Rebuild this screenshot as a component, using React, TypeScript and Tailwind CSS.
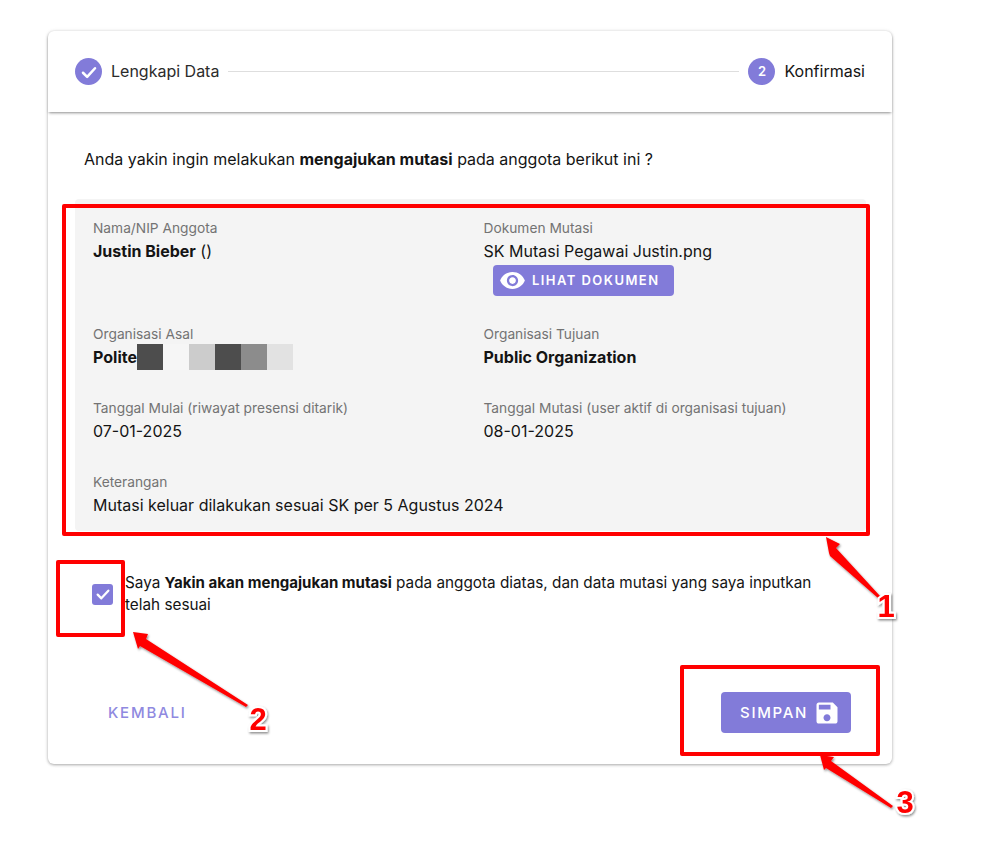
function Field({ label, children, className = "" }: { label: string; children: React.ReactNode; className?: string }) {
  return (
    <div className={className}>
      <div className="text-[13.75px] leading-[21px] text-[#737373]">{label}</div>
      <div className="text-[16px] leading-[24px] text-[#141414]">{children}</div>
    </div>
  );
}

function Arrow({ d }: { d: string }) {
  return <path d={d} fill="#ff0000" filter="url(#as)" />;
}

function Num({ x, y, t }: { x: number; y: number; t: string }) {
  return (
    <text
      x={x}
      y={y}
      textAnchor="middle"
      fontFamily="Liberation Sans, sans-serif"
      fontWeight="700"
      fontSize="31"
      fill="#ff0000"
      stroke="#ffffff"
      strokeWidth="4"
      paintOrder="stroke"
      filter="url(#as)"
    >
      {t}
    </text>
  );
}

export default function App() {
  return (
    <div className="relative w-[985px] h-[841px] bg-white overflow-hidden font-['Inter',sans-serif] text-[#141414]">
      <div className="pl-[48px] pt-[31px]">
        <div className="w-[844px] h-[733px] bg-white rounded-[6px] shadow-[0_1px_3px_rgba(0,0,0,0.3),0_0_4px_rgba(0,0,0,0.08)] flex flex-col">
          {/* Stepper */}
          <div className="h-[81px] shrink-0 rounded-t-[6px] px-[27px] flex items-center shadow-[0_2px_3px_-1px_rgba(0,0,0,0.45)]">
            <div className="w-[27px] h-[27px] rounded-full bg-[#827bd9] flex items-center justify-center">
              <svg width="18" height="18" viewBox="0 0 24 24" fill="none" stroke="#fff" strokeWidth="3.4" strokeLinecap="round" strokeLinejoin="round">
                <path d="M4 13l5.5 5.5L20 7" />
              </svg>
            </div>
            <span className="ml-[9px] text-[16px] leading-[20px] text-[#2b2b2b] -mt-[2px]">Lengkapi Data</span>
            <div className="flex-1 h-px bg-[#dedede] mx-[9px]" />
            <div className="w-[27px] h-[27px] rounded-full bg-[#827bd9] flex items-center justify-center text-white text-[13px] font-semibold">2</div>
            <span className="ml-[9px] text-[16px] leading-[20px] text-[#141414] -mt-[2px]">Konfirmasi</span>
          </div>

          {/* Body */}
          <div className="flex-1 pl-[27px] pr-[26px] flex flex-col">
            <p className="mt-[36px] ml-[9px] text-[16px] leading-[22px]">
              Anda yakin ingin melakukan <b className="font-bold">mengajukan mutasi</b> pada anggota berikut ini ?
            </p>

            <div className="mt-[29px] h-[332px] bg-[#f4f4f4] rounded-[4px] pl-[18px] pt-[19px] grid grid-cols-[390.5px_1fr] content-start">
              <Field label="Nama/NIP Anggota" className="h-[106px]">
                <b className="font-bold">Justin Bieber</b> ()
              </Field>
              <div className="h-[106px]">
                <div className="text-[13.75px] leading-[21px] text-[#737373]">Dokumen Mutasi</div>
                <div className="text-[16px] leading-[24px]">SK Mutasi Pegawai Justin.png</div>
                <div className="mt-[2px] ml-[9px] w-[181px] h-[31px] rounded-[4px] bg-[#827bd9] flex items-center pl-[6px] text-white">
                  <svg width="27" height="27" viewBox="0 0 24 24" fill="#fff">
                    <path d="M12 4.5C7 4.5 2.73 7.61 1 12c1.73 4.39 6 7.5 11 7.5s9.27-3.11 11-7.5c-1.73-4.39-6-7.5-11-7.5M12 17c-2.76 0-5-2.24-5-5s2.24-5 5-5 5 2.24 5 5-2.24 5-5 5m0-8c-1.66 0-3 1.34-3 3s1.34 3 3 3 3-1.34 3-3-1.34-3-3-3" />
                  </svg>
                  <span className="ml-[6.5px] text-[13px] font-semibold tracking-[1.45px] whitespace-nowrap">LIHAT DOKUMEN</span>
                </div>
              </div>

              <Field label="Organisasi Asal" className="h-[74px]">
                <div className="flex items-center h-[24px]">
                  <b className="font-bold">Polite</b>
                  <span className="flex h-[26px]">
                    <span className="w-[26px] bg-[#4d4d4d]" />
                    <span className="w-[26px] bg-[#f6f6f6]" />
                    <span className="w-[26px] bg-[#cccccc]" />
                    <span className="w-[26px] bg-[#4d4d4d]" />
                    <span className="w-[26px] bg-[#8c8c8c]" />
                    <span className="w-[26px] bg-[#e2e2e2]" />
                  </span>
                </div>
              </Field>
              <Field label="Organisasi Tujuan" className="h-[74px]">
                <b className="font-bold">Public Organization</b>
              </Field>

              <Field label="Tanggal Mulai (riwayat presensi ditarik)" className="h-[74px]">
                07-01-2025
              </Field>
              <Field label="Tanggal Mutasi (user aktif di organisasi tujuan)" className="h-[74px]">
                08-01-2025
              </Field>

              <Field label="Keterangan" className="col-span-2">
                Mutasi keluar dilakukan sesuai SK per 5 Agustus 2024
              </Field>
            </div>

            <div className="mt-[41px] flex items-center">
              <div className="ml-[17px] w-[21px] h-[21px] rounded-[3px] bg-[#827bd9] flex items-center justify-center shrink-0">
                <svg width="16" height="16" viewBox="0 0 24 24" fill="none" stroke="#fff" strokeWidth="3.4" strokeLinecap="round" strokeLinejoin="round">
                  <path d="M4 13l5.5 5.5L20 7" />
                </svg>
              </div>
              <p className="ml-[12px] w-[700px] text-[15.3px] leading-[22px]">
                Saya <b className="font-bold text-[15.05px]">Yakin akan mengajukan mutasi</b> pada anggota diatas, dan data mutasi yang saya inputkan telah sesuai
              </p>
            </div>

            <div className="mt-[76px] flex items-center justify-between pl-[33px] pr-[15px]">
              <span className="pt-[1px] text-[15px] font-medium tracking-[1.8px] text-[#8f89e0]">KEMBALI</span>
              <div className="w-[130px] h-[41px] rounded-[4px] bg-[#827bd9] flex items-center pl-[19px] text-white">
                <span className="pt-[1px] text-[15px] font-medium tracking-[1.7px]">SIMPAN</span>
                <svg className="ml-[5px]" width="28" height="28" viewBox="0 0 24 24" fill="#fff">
                  <path d="M17 3H5c-1.11 0-2 .9-2 2v14c0 1.1.89 2 2 2h14c1.1 0 2-.9 2-2V7zm-5 16c-1.66 0-3-1.34-3-3s1.34-3 3-3 3 1.34 3 3-1.34 3-3 3m3-10H5V5h10z" />
                </svg>
              </div>
            </div>
          </div>
        </div>
      </div>

      {/* Annotations */}
      <div className="absolute left-[62px] top-[204px] w-[808px] h-[332px] border-[4px] border-[#ff0000] rounded-[2px]" />
      <div className="absolute left-[56px] top-[560px] w-[69px] h-[77px] border-[4px] border-[#ff0000] rounded-[2px]" />
      <div className="absolute left-[680px] top-[665px] w-[200px] h-[91px] border-[4px] border-[#ff0000] rounded-[2px]" />
      <svg className="absolute left-0 top-0" width="985" height="841" viewBox="0 0 985 841">
        <defs>
          <filter id="as" x="-30%" y="-30%" width="160%" height="160%">
            <feDropShadow dx="1" dy="1.5" stdDeviation="1" floodColor="#000" floodOpacity="0.45" />
          </filter>
        </defs>
        <Arrow d="M826 537 L840 544 L836 548 L880 596 L878 598 L830 556 L829 553 Z" />
        <Arrow d="M133 632 L148 634 L146 639 L248 705 L246 707 L140 646 L138 649 Z" />
        <Arrow d="M820 755 L834 757 L831 761 L893 806 L891 808 L826 768 L824 770 Z" />
        <Num x={886} y={617} t="1" />
        <Num x={258} y={730} t="2" />
        <Num x={905} y={813} t="3" />
      </svg>
    </div>
  );
}
